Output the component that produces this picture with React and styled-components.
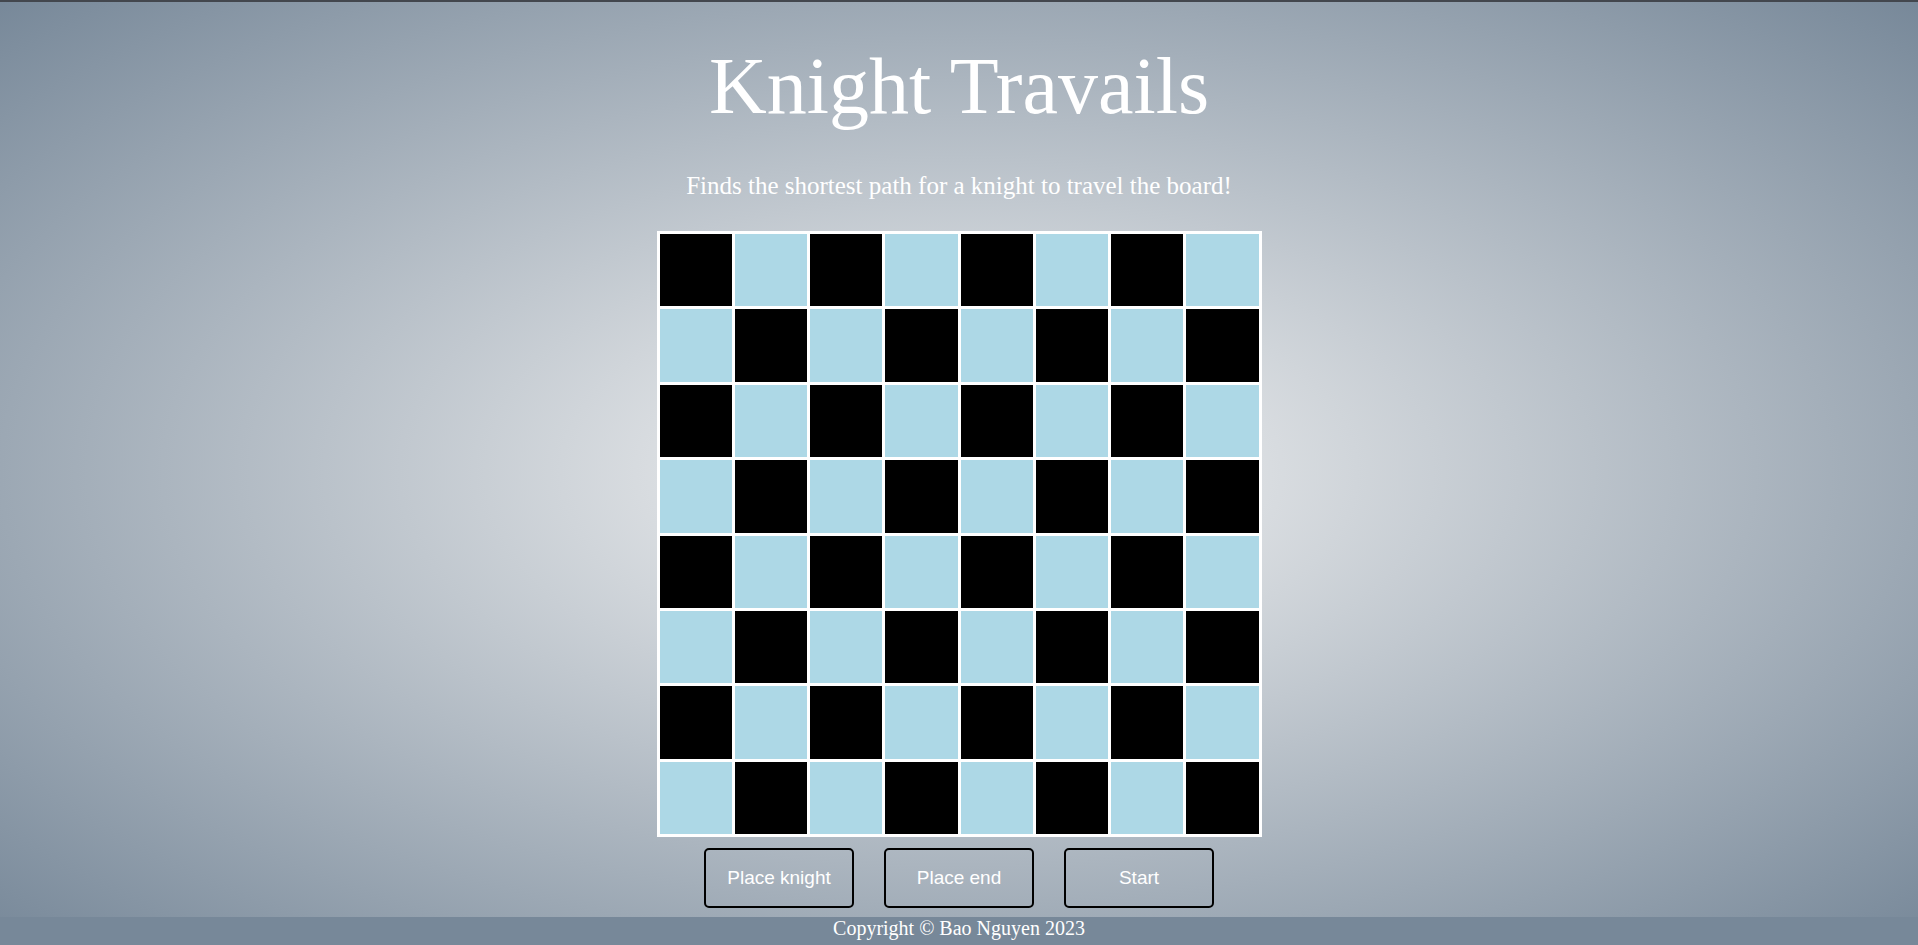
import * as React from 'react';
import styled, { createGlobalStyle } from 'styled-components';

const GlobalStyle = createGlobalStyle`
  html, body {
    margin: 0;
    padding: 0;
  }
  body {
    min-height: 100vh;
    background: radial-gradient(whitesmoke, lightslategray);
    font-family: 'Liberation Serif', 'Times New Roman', serif;
  }
`;

const SIZE = 8;

const App = () => (
  <>
    <GlobalStyle />
    <Page>
      <Title>Knight Travails</Title>
      <Subtitle>Finds the shortest path for a knight to travel the board!</Subtitle>
      <Board>
        {Array.from({ length: SIZE * SIZE }, (_, i) => {
          const row = Math.floor(i / SIZE);
          const col = i % SIZE;
          return <Square key={i} $dark={(row + col) % 2 === 0} />;
        })}
      </Board>
      <Controls>
        <ControlButton type="button">Place knight</ControlButton>
        <ControlButton type="button">Place end</ControlButton>
        <ControlButton type="button">Start</ControlButton>
      </Controls>
      <Footer>Copyright © Bao Nguyen 2023</Footer>
    </Page>
  </>
);

export default App;

const Page = styled.div`
  box-sizing: border-box;
  min-height: 100vh;
  display: flex;
  flex-direction: column;
  align-items: center;
  border-top: 2px solid #43474e;
`;

const Title = styled.h1`
  margin: 38px 0 0;
  font-size: 80px;
  line-height: 92px;
  font-weight: 400;
  color: white;
`;

const Subtitle = styled.p`
  margin: 39px 0 0;
  font-size: 25px;
  line-height: 29px;
  color: white;
`;

const Board = styled.div`
  box-sizing: border-box;
  width: 605px;
  height: 606px;
  margin-top: 31px;
  padding: 3px;
  display: grid;
  grid-template-columns: repeat(8, 1fr);
  grid-template-rows: repeat(8, 1fr);
  gap: 3px;
  background: white;
`;

const Square = styled.div`
  background: ${({ $dark }) => ($dark ? 'black' : 'lightblue')};
`;

const Controls = styled.div`
  display: flex;
  gap: 30px;
  margin-top: 11px;
`;

const ControlButton = styled.button`
  box-sizing: border-box;
  width: 150px;
  height: 60px;
  border: 2px solid black;
  border-radius: 5px;
  background: transparent;
  color: white;
  font-family: 'Liberation Sans', Arial, sans-serif;
  font-size: 19px;
  cursor: pointer;
`;

const Footer = styled.footer`
  align-self: stretch;
  margin-top: auto;
  height: 28px;
  box-sizing: border-box;
  padding-bottom: 5px;
  background: lightslategray;
  color: white;
  font-size: 20px;
  line-height: 23px;
  text-align: center;
`;
